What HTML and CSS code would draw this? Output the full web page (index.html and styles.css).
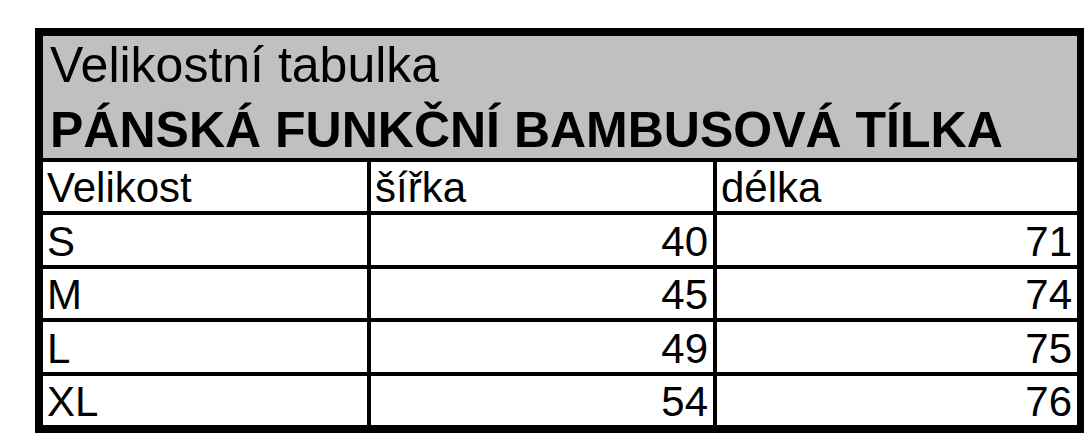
FILE: index.html
```html
<!DOCTYPE html>
<html lang="cs">
<head>
<meta charset="utf-8">
<title>Velikostní tabulka</title>
<link rel="stylesheet" href="styles.css">
</head>
<body>
<div class="sheet">
  <div class="head">
    <div class="head-sub">Velikostní tabulka</div>
    <div class="head-title">PÁNSKÁ FUNKČNÍ BAMBUSOVÁ TÍLKA</div>
  </div>
  <div class="row">
    <div class="cell c1">Velikost</div>
    <div class="cell c2">šířka</div>
    <div class="cell c3">délka</div>
  </div>
  <div class="row">
    <div class="cell c1">S</div>
    <div class="cell c2 num">40</div>
    <div class="cell c3 num">71</div>
  </div>
  <div class="row">
    <div class="cell c1">M</div>
    <div class="cell c2 num">45</div>
    <div class="cell c3 num">74</div>
  </div>
  <div class="row">
    <div class="cell c1">L</div>
    <div class="cell c2 num">49</div>
    <div class="cell c3 num">75</div>
  </div>
  <div class="row last">
    <div class="cell c1">XL</div>
    <div class="cell c2 num">54</div>
    <div class="cell c3 num">76</div>
  </div>
</div>
</body>
</html>
```
FILE: styles.css
```css
html, body {
  margin: 0;
  padding: 0;
  background: #fff;
  overflow: hidden;
}
body {
  font-family: "Liberation Sans", Arial, sans-serif;
  color: #000;
}
.sheet {
  margin: 28px 0 0 35px;
  width: 1034px;
  border: 8px solid #000;
  box-sizing: content-box;
}
.head {
  height: 122px;
  background: #c0c0c0;
  border-bottom: 4px solid #000;
  padding-left: 7px;
  display: flex;
  flex-direction: column;
  justify-content: flex-end;
}
.head-sub {
  font-size: 50px;
  line-height: 54px;
  margin-bottom: 10px;
  white-space: nowrap;
}
.head-title {
  font-size: 50px;
  font-weight: bold;
  line-height: 56px;
  white-space: nowrap;
}
.row {
  display: grid;
  grid-template-columns: 328px 346px 360px;
  height: 53.4px;
  border-bottom: 4px solid #000;
  box-sizing: border-box;
}
.row.last {
  height: 49.4px;
  border-bottom: 0;
}
.cell {
  display: flex;
  align-items: flex-end;
  font-size: 42px;
  line-height: 46px;
  padding-left: 4px;
  white-space: nowrap;
}
.c1, .c2 {
  border-right: 4px solid #000;
}
.num {
  justify-content: flex-end;
  padding-left: 0;
  padding-right: 5px;
}
```
